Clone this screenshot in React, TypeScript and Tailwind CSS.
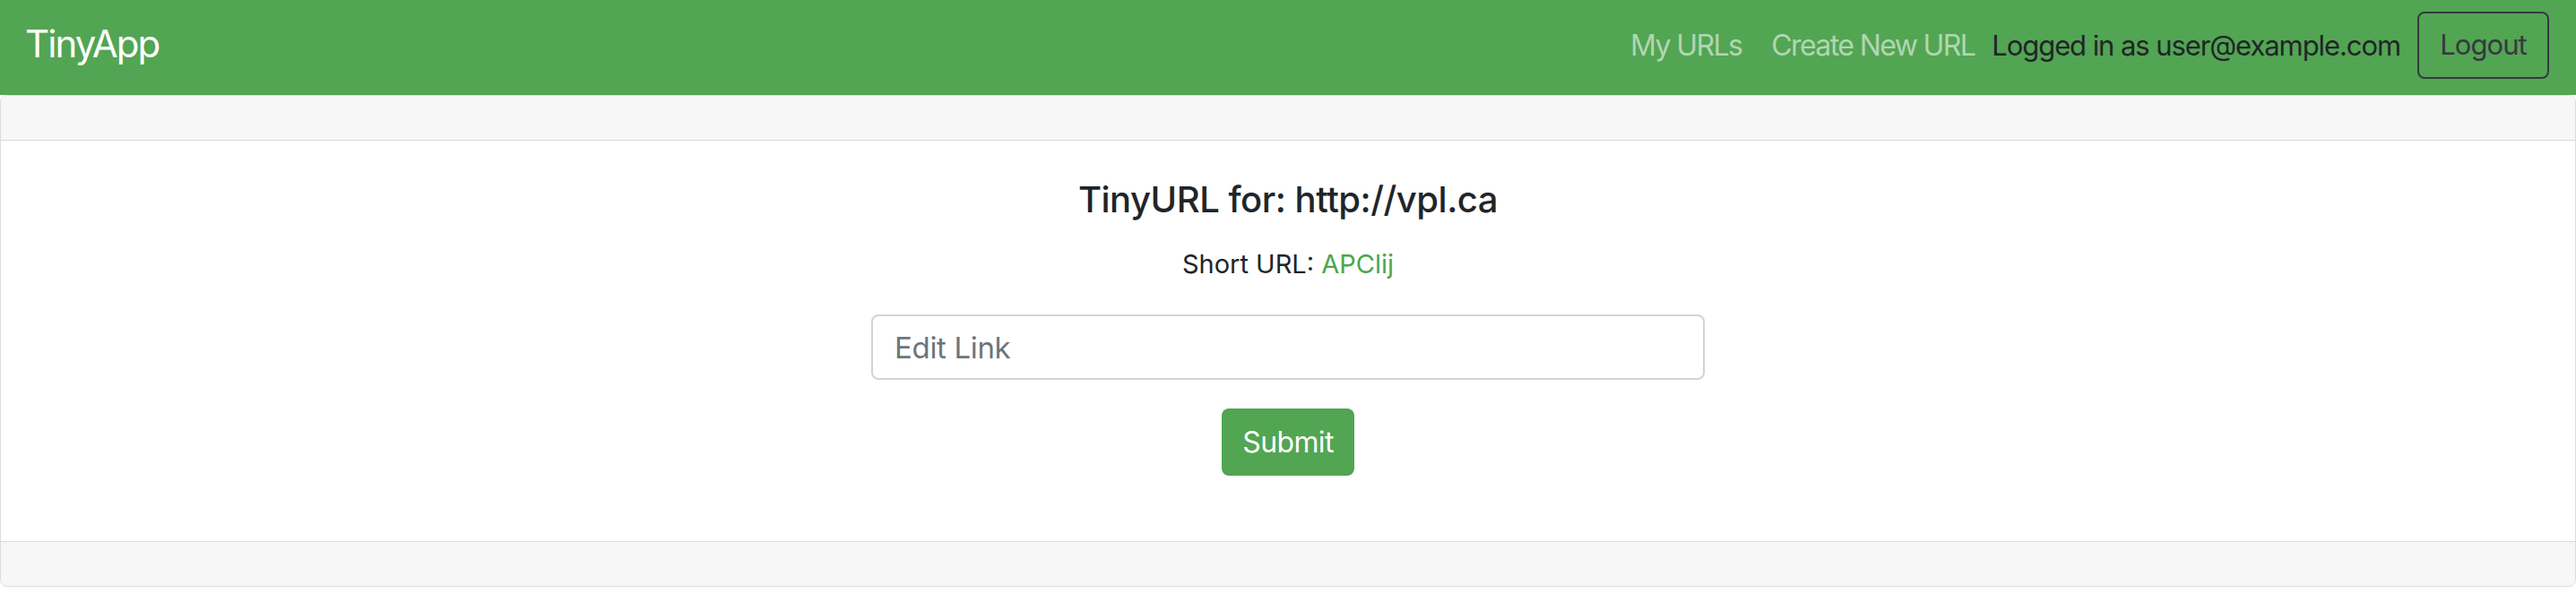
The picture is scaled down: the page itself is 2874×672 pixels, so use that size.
import React from "react";

export default function App() {
  return (
    <div className="w-full bg-white text-[#212529]" style={{ fontFamily: "Inter, 'Noto Sans', sans-serif" }}>
      <nav className="flex h-[106px] items-center justify-between bg-[#52a552] pl-[28px] pr-[30px]">
        <a className="mb-[8px] text-[42px] leading-none tracking-[-0.045em] text-white">TinyApp</a>
        <div className="flex items-center">
          <a className="mb-[4px] text-[32px] tracking-[-0.05em] text-[#b1d6b1]">My URLs</a>
          <a className="mb-[4px] ml-[33px] text-[32px] tracking-[-0.05em] text-[#b1d6b1]">Create New URL</a>
          <span className="mb-[4px] ml-[19px] text-[31px] tracking-[-0.035em] text-[#212529]">Logged in as user@example.com</span>
          <button className="mb-[6px] ml-[19px] flex h-[75px] w-[147px] items-center justify-center rounded-[8px] border-[2px] border-[#343a40] text-[31px] tracking-[-0.03em] text-[#343a40]">
            Logout
          </button>
        </div>
      </nav>
      <div className="rounded-[8px] border border-[#dcdcdc]">
        <div className="h-[50px] rounded-t-[8px] border-b border-[#dcdcdc] bg-[#f7f7f7]" />
        <div className="flex flex-col items-center pt-[42px] pb-[73px]">
          <h4 className="text-[40px] font-medium leading-[48px] tracking-[-0.012em]">TinyURL for: http://vpl.ca</h4>
          <p className="mt-[26px] text-[29px] leading-[44px]">
            Short URL: <a className="text-[#4aa64a]">APClij</a>
          </p>
          <input
            className="mt-[34px] h-[73px] w-[930px] rounded-[8px] border-[2px] border-[#ced4da] pl-[24px] text-[33px] tracking-[-0.01em] outline-none placeholder:text-[#6c757d]"
            placeholder="Edit Link"
          />
          <button className="mt-[32px] flex h-[75px] w-[148px] items-center justify-center rounded-[8px] bg-[#52a552] text-[32px] tracking-[-0.02em] text-white">
            Submit
          </button>
        </div>
        <div className="h-[50px] rounded-b-[8px] border-t border-[#dcdcdc] bg-[#f7f7f7]" />
      </div>
    </div>
  );
}
